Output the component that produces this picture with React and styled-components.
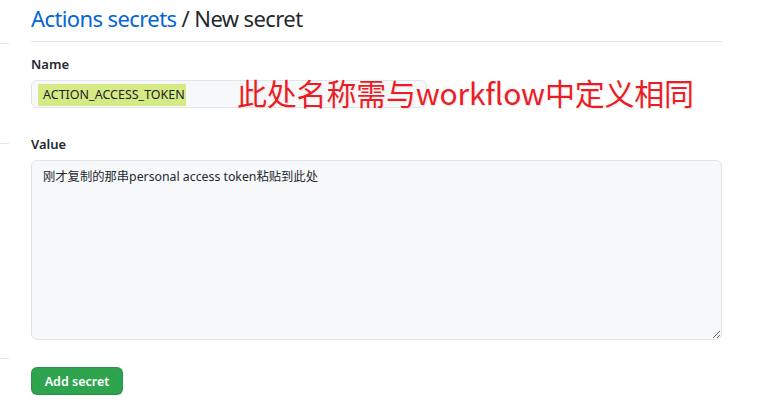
import React from 'react'
import styled, { createGlobalStyle } from 'styled-components'

const GlobalStyle = createGlobalStyle`
  html, body {
    margin: 0;
    padding: 0;
    background: #fff;
  }
  body {
    font-family: "Noto Sans", "Open Sans", "Noto Sans CJK SC", sans-serif;
    color: #24292e;
  }
`

const Page = styled.div`
  display: flex;
  width: 761px;
  height: 414px;
  overflow: hidden;
`

const Gutter = styled.div`
  width: 9px;
  display: flex;
  flex-direction: column;
`

const GutterCell = styled.div`
  height: ${({ h }) => h}px;
  border-bottom: 1px solid #e1e4e8;
  flex-shrink: 0;
`

const Main = styled.div`
  margin-left: 22px;
  width: 691px;
  position: relative;
`

const Title = styled.h2`
  margin: 0;
  font-size: 22px;
  font-weight: 400;
  line-height: 36px;
  letter-spacing: -0.6px;
  padding-bottom: 5px;
  border-bottom: 1px solid #e1e4e8;
  color: #24292e;
`

const Crumb = styled.a`
  color: #0366d6;
  text-decoration: none;
`

const Field = styled.div`
  display: flex;
  flex-direction: column;
  margin-top: ${({ top }) => top}px;
`

const Label = styled.label`
  font-size: 13px;
  font-weight: 600;
  line-height: 20px;
  margin-bottom: 6px;
`

const FakeInput = styled.div`
  box-sizing: border-box;
  width: 396px;
  height: 28px;
  background: #f6f8fa;
  border: 1px solid #e1e4e8;
  border-radius: 6px;
  padding: 4px 6px;
  display: flex;
  align-items: center;
`

const Mark = styled.span`
  background: #d4ea85;
  font-size: 12.5px;
  line-height: 22px;
  padding: 0 6px 0 5px;
  width: 148px;
  box-sizing: border-box;
  color: #1f2328;
  margin-top: 2px;
`

const Note = styled.div`
  position: absolute;
  left: 206px;
  top: 72px;
  font-family: "Noto Sans CJK SC", "Noto Sans", sans-serif;
  font-size: 30px;
  line-height: 40px;
  color: #ec1c24;
  letter-spacing: -0.2px;
  text-shadow: 0 0 2px #fff, 0 0 2px #fff, 1px 1px 1px #ddd;
  white-space: nowrap;
`

const TextArea = styled.textarea`
  box-sizing: border-box;
  width: 691px;
  height: 180px;
  background: #f6f8fa;
  border: 1px solid #e1e4e8;
  border-radius: 6px;
  padding: 6px 11px;
  font-family: "Noto Sans", "Noto Sans CJK SC", sans-serif;
  font-size: 12.3px;
  line-height: 20px;
  color: #24292e;
  resize: both;
  outline: none;
`

const Button = styled.button`
  margin-top: 27px;
  width: 92px;
  height: 28px;
  background: #2ea44f;
  border: 1px solid rgba(27, 31, 35, 0.15);
  border-radius: 6px;
  color: #fff;
  font-family: "Noto Sans", sans-serif;
  font-size: 12.5px;
  font-weight: 600;
  cursor: pointer;
`

export default function App() {
  return (
    <Page>
      <GlobalStyle />
      <Gutter>
        <GutterCell h={43} />
        <GutterCell h={99} />
        <GutterCell h={214} />
      </Gutter>
      <Main>
        <Title>
          <Crumb href="#">Actions secrets</Crumb> / New secret
        </Title>
        <Field top={12}>
          <Label>Name</Label>
          <FakeInput>
            <Mark>ACTION_ACCESS_TOKEN</Mark>
          </FakeInput>
        </Field>
        <Note>此处名称需与workflow中定义相同</Note>
        <Field top={26}>
          <Label>Value</Label>
          <TextArea readOnly defaultValue="刚才复制的那串personal access token粘贴到此处" />
        </Field>
        <Button>Add secret</Button>
      </Main>
    </Page>
  )
}
